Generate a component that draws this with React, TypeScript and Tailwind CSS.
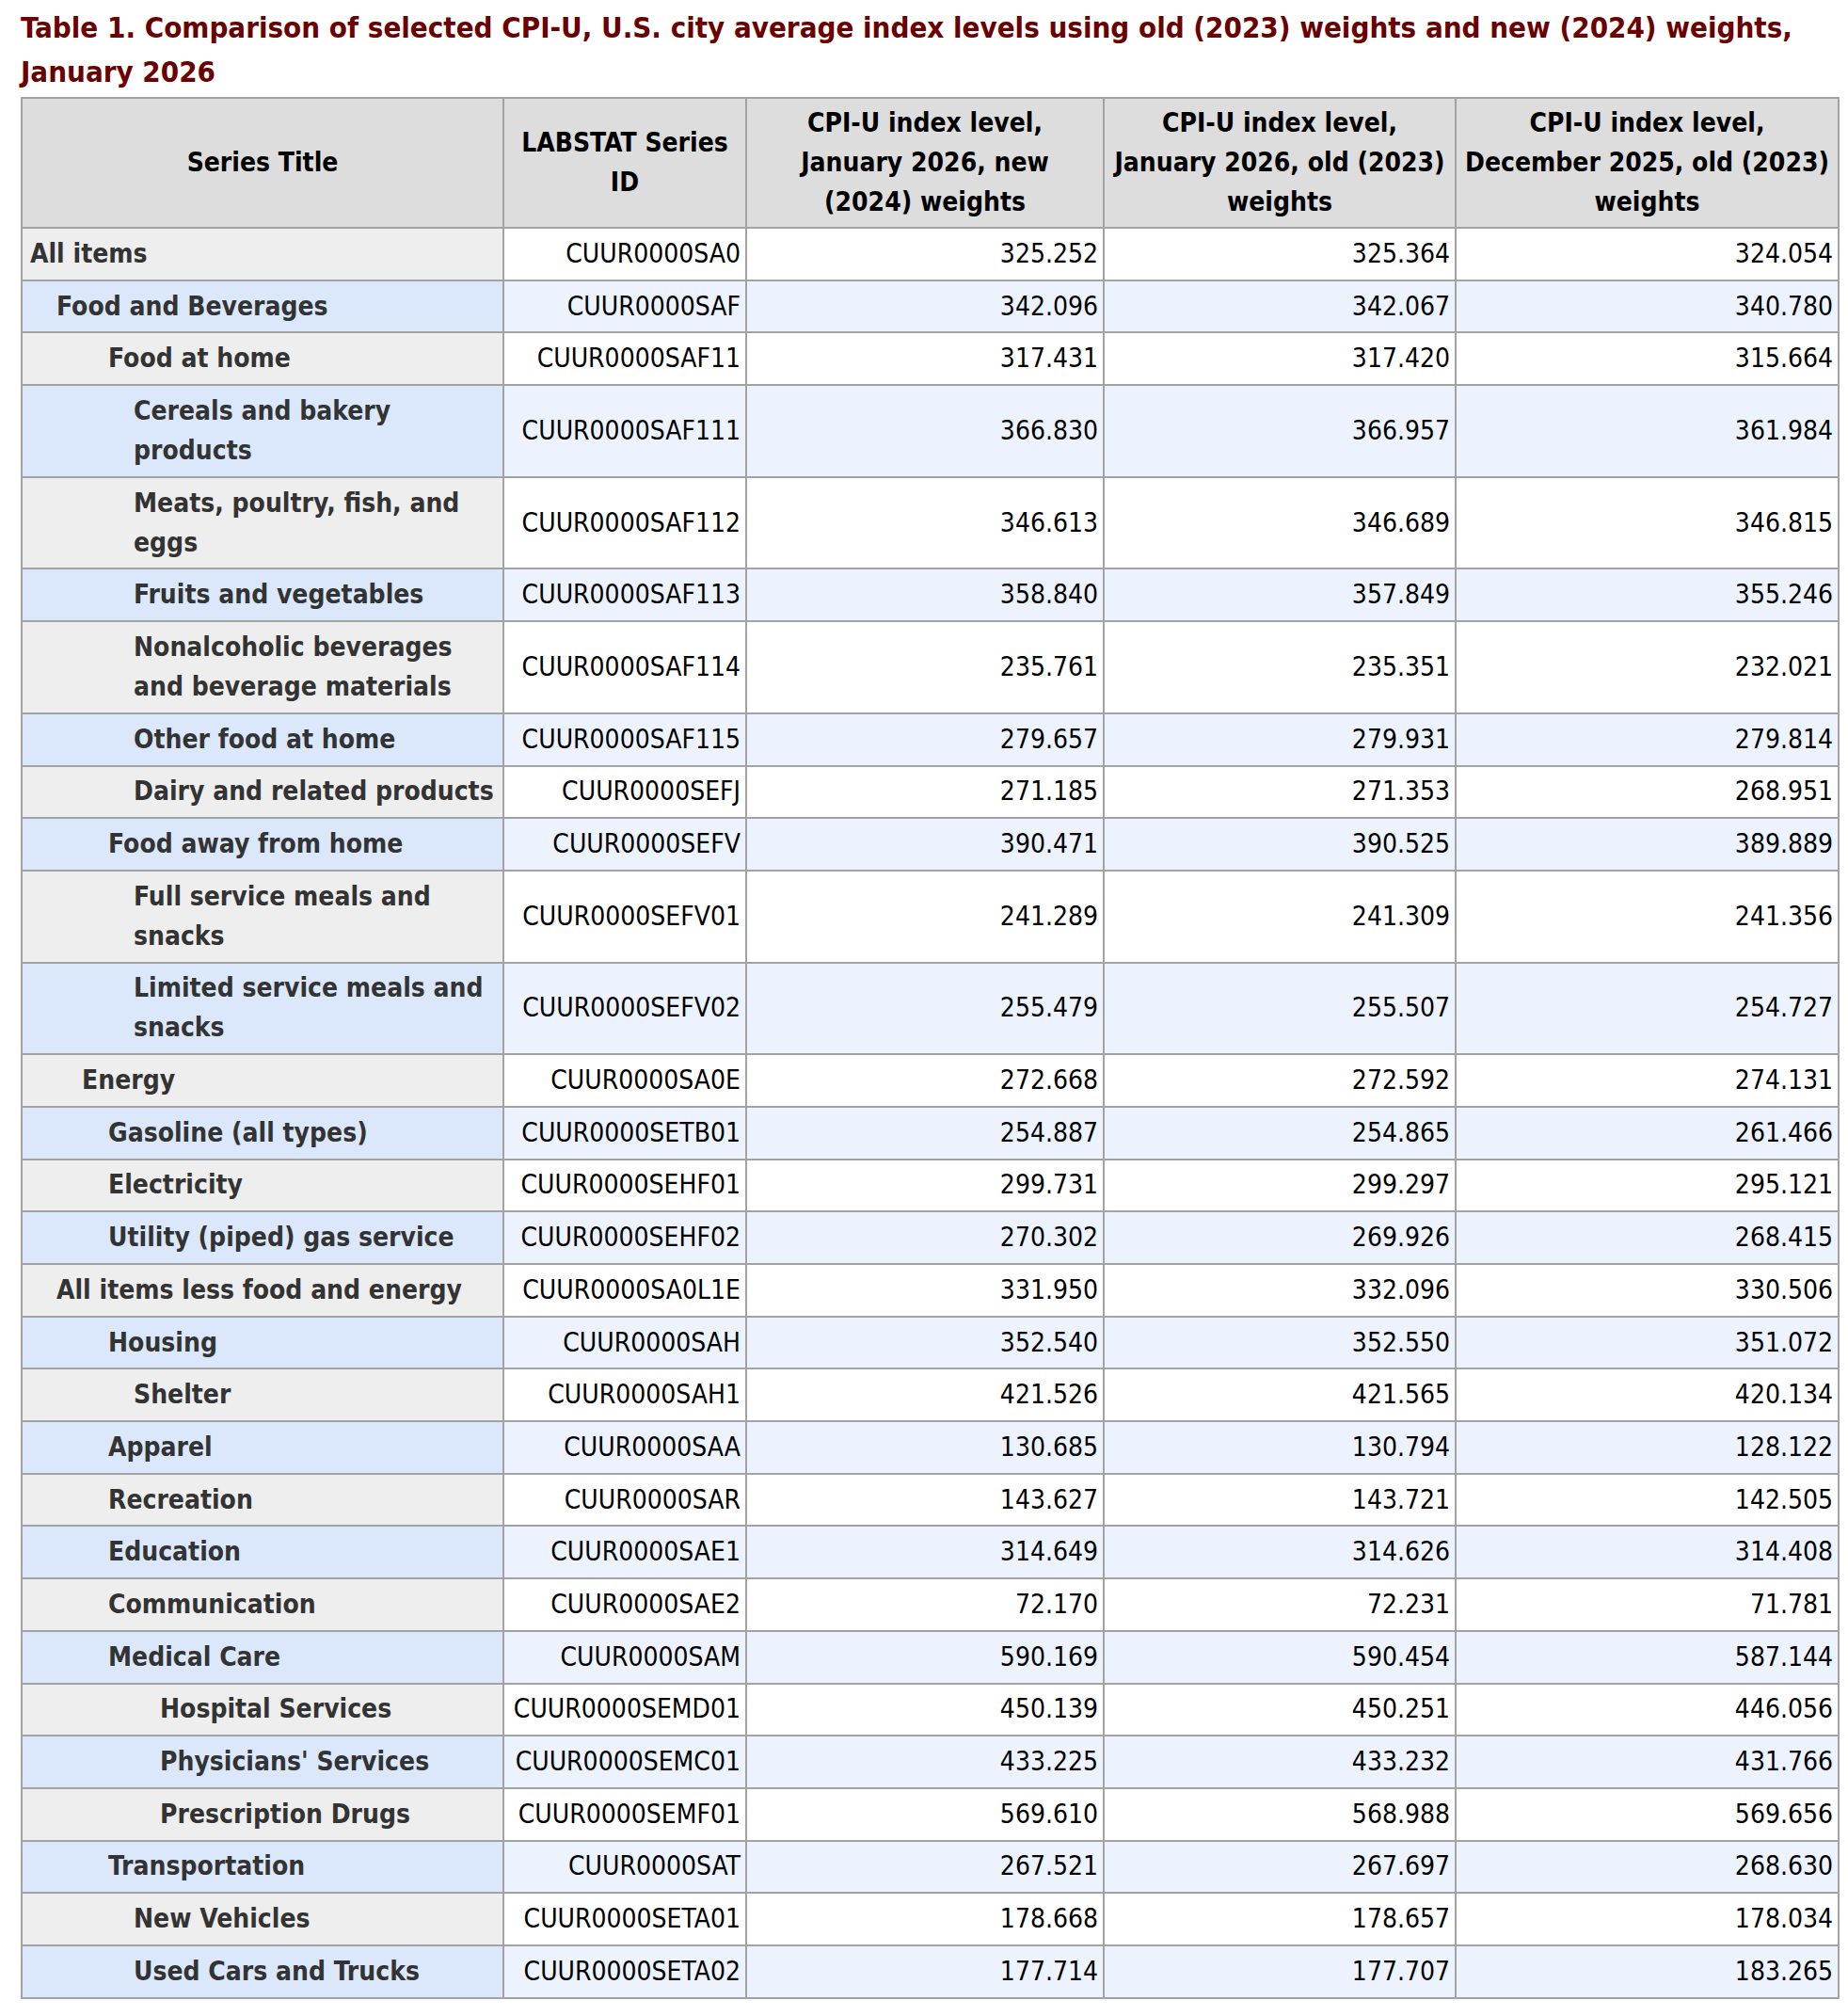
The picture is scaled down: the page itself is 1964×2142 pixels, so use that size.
import React from "react";

type Row = [string[], number, string, string, string, string];

const rows: Row[] = [
  [["All items"], 0, "CUUR0000SA0", "325.252", "325.364", "324.054"],
  [["Food and Beverages"], 1, "CUUR0000SAF", "342.096", "342.067", "340.780"],
  [["Food at home"], 3, "CUUR0000SAF11", "317.431", "317.420", "315.664"],
  [["Cereals and bakery", "products"], 4, "CUUR0000SAF111", "366.830", "366.957", "361.984"],
  [["Meats, poultry, fish, and", "eggs"], 4, "CUUR0000SAF112", "346.613", "346.689", "346.815"],
  [["Fruits and vegetables"], 4, "CUUR0000SAF113", "358.840", "357.849", "355.246"],
  [["Nonalcoholic beverages", "and beverage materials"], 4, "CUUR0000SAF114", "235.761", "235.351", "232.021"],
  [["Other food at home"], 4, "CUUR0000SAF115", "279.657", "279.931", "279.814"],
  [["Dairy and related products"], 4, "CUUR0000SEFJ", "271.185", "271.353", "268.951"],
  [["Food away from home"], 3, "CUUR0000SEFV", "390.471", "390.525", "389.889"],
  [["Full service meals and", "snacks"], 4, "CUUR0000SEFV01", "241.289", "241.309", "241.356"],
  [["Limited service meals and", "snacks"], 4, "CUUR0000SEFV02", "255.479", "255.507", "254.727"],
  [["Energy"], 2, "CUUR0000SA0E", "272.668", "272.592", "274.131"],
  [["Gasoline (all types)"], 3, "CUUR0000SETB01", "254.887", "254.865", "261.466"],
  [["Electricity"], 3, "CUUR0000SEHF01", "299.731", "299.297", "295.121"],
  [["Utility (piped) gas service"], 3, "CUUR0000SEHF02", "270.302", "269.926", "268.415"],
  [["All items less food and energy"], 1, "CUUR0000SA0L1E", "331.950", "332.096", "330.506"],
  [["Housing"], 3, "CUUR0000SAH", "352.540", "352.550", "351.072"],
  [["Shelter"], 4, "CUUR0000SAH1", "421.526", "421.565", "420.134"],
  [["Apparel"], 3, "CUUR0000SAA", "130.685", "130.794", "128.122"],
  [["Recreation"], 3, "CUUR0000SAR", "143.627", "143.721", "142.505"],
  [["Education"], 3, "CUUR0000SAE1", "314.649", "314.626", "314.408"],
  [["Communication"], 3, "CUUR0000SAE2", "72.170", "72.231", "71.781"],
  [["Medical Care"], 3, "CUUR0000SAM", "590.169", "590.454", "587.144"],
  [["Hospital Services"], 5, "CUUR0000SEMD01", "450.139", "450.251", "446.056"],
  [["Physicians' Services"], 5, "CUUR0000SEMC01", "433.225", "433.232", "431.766"],
  [["Prescription Drugs"], 5, "CUUR0000SEMF01", "569.610", "568.988", "569.656"],
  [["Transportation"], 3, "CUUR0000SAT", "267.521", "267.697", "268.630"],
  [["New Vehicles"], 4, "CUUR0000SETA01", "178.668", "178.657", "178.034"],
  [["Used Cars and Trucks"], 4, "CUUR0000SETA02", "177.714", "177.707", "183.265"],
];

const indent: Record<number, string> = {
  0: "pl-[8px]",
  1: "pl-[36px]",
  2: "pl-[63px]",
  3: "pl-[91px]",
  4: "pl-[118px]",
  5: "pl-[146px]",
};

const headers: string[][] = [
  ["Series Title"],
  ["LABSTAT Series", "ID"],
  ["CPI-U index level,", "January 2026, new", "(2024) weights"],
  ["CPI-U index level,", "January 2026, old (2023)", "weights"],
  ["CPI-U index level,", "December 2025, old (2023)", "weights"],
];

function Lines({ lines }: { lines: string[] }) {
  return (
    <>
      {lines.map((l, i) => (
        <React.Fragment key={i}>
          {i > 0 && <br />}
          {l}
        </React.Fragment>
      ))}
    </>
  );
}

export default function App() {
  return (
    <div
      className="min-h-[2142px] bg-white pl-[22px] pt-[6px] text-black"
      style={{ fontFamily: 'Tahoma, "DejaVu Sans Condensed", "DejaVu Sans", sans-serif' }}
    >
      <h1 className="w-[1931px] text-[31px] font-bold leading-[47px] text-[#6b0000]">
        Table 1. Comparison of selected CPI-U, U.S. city average index levels using old (2023) weights and new (2024) weights, January 2026
      </h1>
      <table className="mt-[3px] w-[1931px] table-fixed border-collapse border-2 border-[#a3a3a3] text-[28px] leading-[42px]">
        <colgroup>
          <col className="w-[512px]" />
          <col className="w-[258px]" />
          <col className="w-[380px]" />
          <col className="w-[374px]" />
          <col className="w-[407px]" />
        </colgroup>
        <thead>
          <tr className="bg-[#dddddd]">
            {headers.map((h, i) => (
              <th
                key={i}
                className="border-2 border-[#a3a3a3] px-[4px] py-[5px] text-center align-middle font-bold whitespace-nowrap"
              >
                <Lines lines={h} />
              </th>
            ))}
          </tr>
        </thead>
        <tbody>
          {rows.map((r, i) => {
            const odd = i % 2 === 1;
            const firstBg = odd ? "bg-[#dbe8fc]" : "bg-[#eeeeee]";
            const restBg = odd ? "bg-[#ecf3ff]" : "bg-white";
            return (
              <tr key={i}>
                <th
                  className={`border-2 border-[#a3a3a3] py-[5.85px] pr-[4px] text-left align-middle font-bold whitespace-nowrap text-[#333333] ${firstBg} ${indent[r[1]]}`}
                >
                  <Lines lines={r[0]} />
                </th>
                {[r[2], r[3], r[4], r[5]].map((v, j) => (
                  <td
                    key={j}
                    className={`border-2 border-[#a3a3a3] py-[5.85px] pl-[4px] pr-[5px] text-right align-middle font-normal whitespace-nowrap ${restBg}`}
                  >
                    {v}
                  </td>
                ))}
              </tr>
            );
          })}
        </tbody>
      </table>
    </div>
  );
}
